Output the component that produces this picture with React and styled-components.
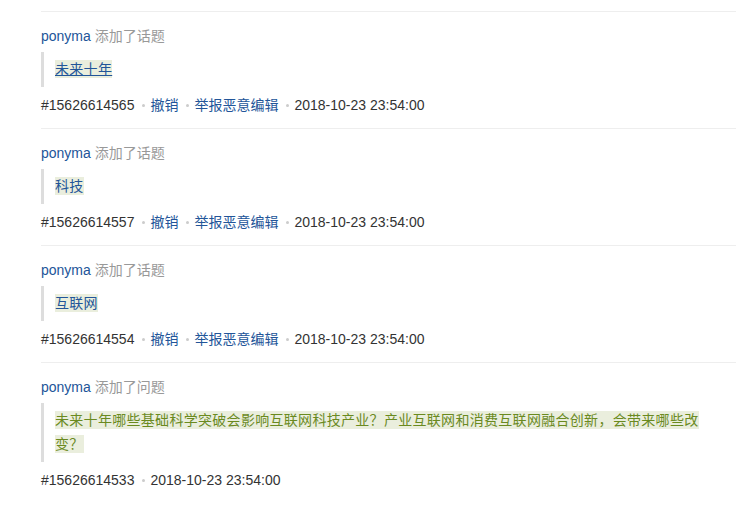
import React from "react";
import styled, { createGlobalStyle } from "styled-components";

const Global = createGlobalStyle`
  html, body { margin: 0; padding: 0; background: #fff; }
  body {
    font-family: "Liberation Sans", Arial, "Noto Sans CJK SC", sans-serif;
    font-size: 14px;
    color: #333;
  }
`;

const Page = styled.div`
  padding: 11px 0 0 41px;
  width: 695px;
`;

const Entry = styled.div`
  border-top: 1px solid #eeeeee;
  padding: 12px 0 11px;
`;

const Title = styled.div`
  line-height: 24px;
`;

const User = styled.a`
  color: #225599;
  text-decoration: none;
`;

const Action = styled.span`
  color: #999;
  margin-left: 4px;
`;

const Quote = styled.blockquote`
  margin: 4px 30px 0 0;
  padding: 5px 0 6px 11px;
  border-left: 3px solid #dddddd;
  line-height: 24px;
  letter-spacing: 0.3px;
`;

const Ins = styled.a`
  background: #eaeedd;
  padding: 1px 0;
  color: ${(p) => (p.$question ? "#6a8a1f" : "#225599")};
  text-decoration: ${(p) => (p.$underline ? "underline" : "none")};
`;

const Meta = styled.div`
  margin-top: 6px;
  line-height: 24px;
  color: #333;
  display: flex;
  align-items: center;
`;

const Dot = styled.span`
  display: inline-block;
  width: 3px;
  height: 3px;
  border-radius: 50%;
  background: #cccccc;
  margin: 1px 5px 0 8px;
`;

const MetaLink = styled.a`
  color: #225599;
  text-decoration: none;
`;

const entries = [
  { id: "15626614565", kind: "话题", text: "未来十年", underline: true, links: true },
  { id: "15626614557", kind: "话题", text: "科技", links: true },
  { id: "15626614554", kind: "话题", text: "互联网", links: true },
  {
    id: "15626614533",
    kind: "问题",
    text: "未来十年哪些基础科学突破会影响互联网科技产业？产业互联网和消费互联网融合创新，会带来哪些改变？",
    question: true,
  },
];

export default function App() {
  return (
    <>
      <Global />
      <Page>
        {entries.map((e) => (
          <Entry key={e.id}>
            <Title>
              <User>ponyma</User>
              <Action>添加了{e.kind}</Action>
            </Title>
            <Quote>
              <Ins $question={e.question} $underline={e.underline}>
                {e.text}
              </Ins>
            </Quote>
            <Meta>
              <span>#{e.id}</span>
              {e.links && (
                <>
                  <Dot />
                  <MetaLink>撤销</MetaLink>
                  <Dot />
                  <MetaLink>举报恶意编辑</MetaLink>
                </>
              )}
              <Dot />
              <span>2018-10-23 23:54:00</span>
            </Meta>
          </Entry>
        ))}
      </Page>
    </>
  );
}
